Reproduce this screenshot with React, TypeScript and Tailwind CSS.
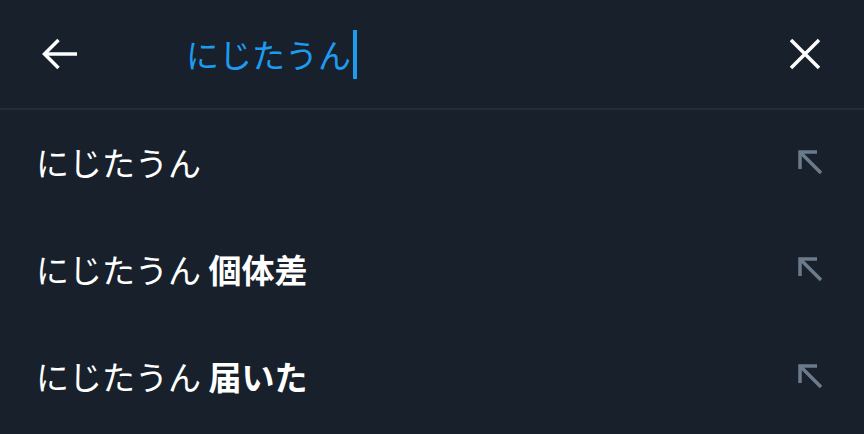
import React from 'react';

const suggestions = [
  { base: 'にじたうん', extra: '' },
  { base: 'にじたうん', extra: '個体差' },
  { base: 'にじたうん', extra: '届いた' },
];

function UpLeftArrow() {
  return (
    <svg width="26" height="26" viewBox="0 0 26 26" fill="none" stroke="#6b7b8b" strokeWidth="3.5" strokeLinecap="butt">
      <path d="M3 20V3H20" strokeLinejoin="miter" />
      <path d="M3.5 3.5L24 24" />
    </svg>
  );
}

export default function App() {
  const font = { fontFamily: '"Noto Sans CJK JP", "Noto Sans", sans-serif' };
  return (
    <div className="w-[864px] h-[434px] bg-[#17202b] overflow-hidden" style={font}>
      {/* Header */}
      <div className="h-[110px] flex items-center border-b-2 border-[#222d38]">
        <button className="w-[120px] h-full flex items-center pl-[41px]">
          <svg width="38" height="34" viewBox="0 0 38 34" fill="none" stroke="white" strokeWidth="3.5">
            <path d="M36 17H4" />
            <path d="M17.5 3L3.5 17L17.5 31" strokeLinejoin="miter" />
          </svg>
        </button>
        <div className="flex-1 flex items-center pl-[66px]">
          <span className="text-[33px] leading-none text-[#1d9bf0]">にじたうん</span>
          <span className="w-[4px] h-[49px] bg-[#1d9bf0] ml-[2px]" />
        </div>
        <button className="h-full flex items-center pr-[43px]">
          <svg width="32" height="32" viewBox="0 0 32 32" fill="none" stroke="white" strokeWidth="3.5">
            <path d="M2 2L30 30M30 2L2 30" />
          </svg>
        </button>
      </div>

      {/* Suggestions */}
      {suggestions.map((s, i) => (
        <div key={i} className="h-[110px] flex items-center justify-between pl-[36px] pr-[41px] -mt-[3px] first:mt-0">
          <div className="text-[33px] leading-none text-white">
            {s.base}
            {s.extra && <span className="font-bold"> {s.extra}</span>}
          </div>
          <UpLeftArrow />
        </div>
      ))}
    </div>
  );
}
